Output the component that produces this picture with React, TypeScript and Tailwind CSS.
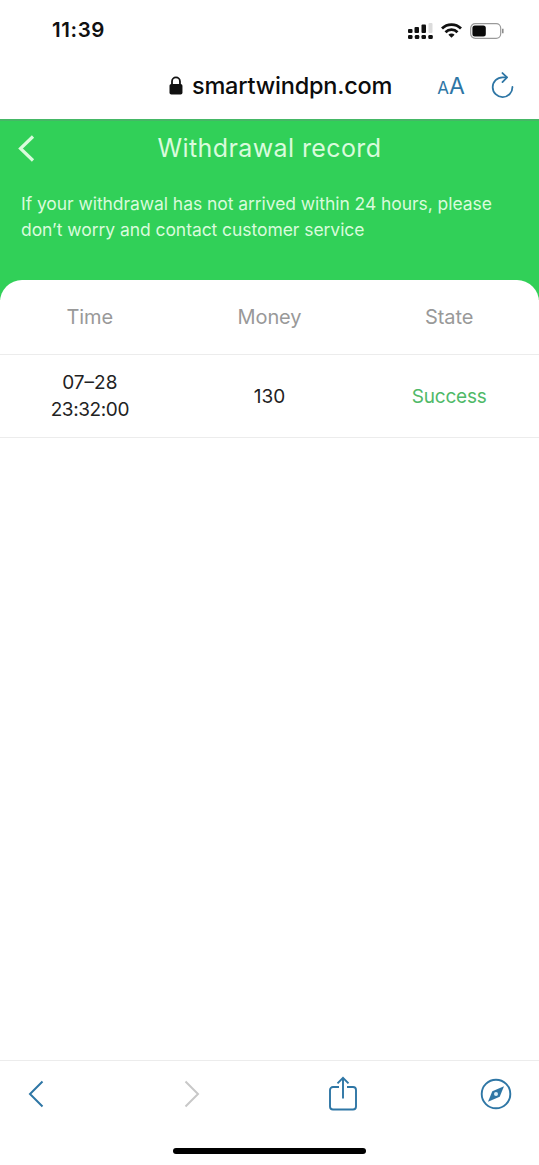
const records = [
   { date: "07–28", time: "23:32:00", money: "130", state: "Success" },
];

const columns = ["Time", "Money", "State"];

const StatusBar = () => (
   <div className="flex h-[61px] shrink-0 items-center justify-between pr-[34px] pl-[52px]">
      <span className="text-[20.5px] font-semibold tracking-[0.6px]">11:39</span>
      <div className="flex items-center gap-2">
         <svg width="25" height="16" viewBox="0 0 25 16" fill="#111">
            <rect x="0" y="6" width="4.5" height="4" rx="1" />
            <rect x="6.5" y="4" width="4.5" height="6" rx="1" />
            <rect x="13.5" y="1.5" width="4.5" height="8.5" rx="1" />
            <rect x="20.5" y="0" width="4" height="10" rx="1" fill="#dcdcdc" />
            <rect x="0" y="12" width="4.5" height="4" rx="1.3" />
            <rect x="6.8" y="12" width="4.5" height="4" rx="1.3" />
            <rect x="13.5" y="12" width="4.5" height="4" rx="1.3" />
            <rect x="20.3" y="12" width="4.5" height="4" rx="1.3" />
         </svg>
         <svg width="21" height="15" viewBox="0 0 21 15" fill="none" stroke="#111" strokeWidth="2.8">
            <path d="M1 5.4a13.6 13.6 0 0 1 19 0" />
            <path d="M4.5 9.2a8.5 8.5 0 0 1 12 0" />
            <path d="M10.5 14.8 7.4 11.8a4.4 4.4 0 0 1 6.2 0z" fill="#111" stroke="none" />
         </svg>
         <svg width="35" height="16" viewBox="0 0 35 16">
            <rect x="0.7" y="0.7" width="30" height="14.6" rx="4.5" fill="none" stroke="#9a9a9a" strokeWidth="1.2" />
            <rect x="2.4" y="2.4" width="13.4" height="11.2" rx="2.5" fill="#0a0a0a" />
            <path d="M32.8 5.8v4.4" stroke="#888" strokeWidth="1.5" />
         </svg>
      </div>
   </div>
);

const AddressBar = () => (
   <div className="flex h-[58px] shrink-0 items-center pr-6 pb-[9px] pl-[169px]">
      <svg width="14" height="19" viewBox="0 0 14 19">
         <path d="M3 9V5.4a4 4 0 0 1 8 0V9" fill="none" stroke="#111" strokeWidth="1.8" />
         <rect x="0.5" y="8" width="13" height="10.5" rx="1.8" fill="#111" />
      </svg>
      <span className="ml-[9px] w-[246px] text-[23.5px] font-medium tracking-[-0.2px] whitespace-nowrap text-[#0c0c0c]">
         smartwindpn.com
      </span>
      <div className="mt-0.5 flex w-[54px] items-baseline text-[#2e76a5]">
         <span className="text-[17px]">A</span>
         <span className="text-[23px]">A</span>
      </div>
      <svg
         className="mb-0.5"
         width="24"
         height="26"
         viewBox="0 0 24 26"
         fill="none"
         stroke="#2e76a5"
         strokeWidth="1.8"
         strokeLinecap="round"
         strokeLinejoin="round"
      >
         <path d="M21.5 15A9.900 9.900 0 1 1 11.700 5.300h4" />
         <path d="M11.500 1l4.600 4.400-4.600 4.600" />
      </svg>
   </div>
);

const RecordHeader = () => (
   <div className="h-[181px] shrink-0 border-t-2 border-[#45b866] bg-[#31d058] text-[#d9fbdc]">
      <div className="grid h-[55px] grid-cols-[60px_1fr_60px] items-center">
         <svg
            className="ml-[18px]"
            width="17"
            height="27"
            viewBox="0 0 17 27"
            fill="none"
            stroke="currentColor"
            strokeWidth="3.2"
         >
            <path d="M15 1.500 2.500 13.500 15 25.500" />
         </svg>
         <h1 className="pt-px text-center text-[25px] tracking-[0.4px] whitespace-nowrap">
            Withdrawal record
         </h1>
      </div>
      <p className="mt-[15px] pl-[21px] text-[17.500px] leading-[26px] tracking-[-0.06px] whitespace-nowrap">
         If your withdrawal has not arrived within 24 hours, please
         <br />
         don’t worry and contact customer service
      </p>
   </div>
);

const RecordTable = () => (
   <div className="-mt-5 flex-1 rounded-t-[22px] bg-white">
      <div className="grid h-[75px] grid-cols-3 items-center border-b border-[#ececec] text-center text-[20px] tracking-[-0.1px] text-[#999]">
         {columns.map((column) => (
            <span key={column}>{column}</span>
         ))}
      </div>
      {records.map((record) => (
         <div
            key={record.time}
            className="grid h-[83px] grid-cols-3 items-center border-b border-[#ececec] text-center text-[19px] leading-[27px] text-[#222]"
         >
            <div className="flex flex-col">
               <span>{record.date}</span>
               <span className="tracking-[-0.4px]">{record.time}</span>
            </div>
            <span>{record.money}</span>
            <span className="tracking-[-0.2px] text-[#4fb968]">{record.state}</span>
         </div>
      ))}
   </div>
);

const Toolbar = () => (
   <div className="flex h-[105px] shrink-0 flex-col items-center border-t border-[#ececec]">
      <div className="flex h-[65px] w-full items-center pl-[28px] text-[#2e76a5]">
         <svg width="16" height="28" viewBox="0 0 16 28" fill="none" stroke="currentColor" strokeWidth="2">
            <path d="M14.5 1.5 2 14l12.5 12.5" />
         </svg>
         <svg
            className="ml-[140px]"
            width="16"
            height="28"
            viewBox="0 0 16 28"
            fill="none"
            stroke="#c8c8c8"
            strokeWidth="2"
         >
            <path d="M1.5 1.5 14 14 1.5 26.5" />
         </svg>
         <svg
            className="mb-px ml-[129px]"
            width="28"
            height="35"
            viewBox="0 0 28 35"
            fill="none"
            stroke="currentColor"
            strokeWidth="1.9"
         >
            <path d="M10 11H4a3 3 0 0 0-3 3v16.500a3 3 0 0 0 3 3h20a3 3 0 0 0 3-3V14a3 3 0 0 0-3-3h-6" />
            <path d="M14 22.500V1.800M8.500 7.300 14 1.800l5.500 5.500" />
         </svg>
         <svg
            className="ml-[123px]"
            width="32"
            height="32"
            viewBox="0 0 32 32"
            fill="none"
            stroke="currentColor"
            strokeWidth="1.9"
         >
            <circle cx="16" cy="16" r="14.3" />
            <path d="M24 8.300 19.700 18.800 8 23.700l4.300-10.500z" fill="currentColor" stroke="none" />
            <circle cx="16" cy="16" r="2" fill="#d9eefa" stroke="none" />
         </svg>
      </div>
      <div className="mt-[22px] h-[6px] w-[193px] rounded-full bg-black" />
   </div>
);

const App = () => {
   return (
      <div className="flex h-[1165px] w-[539px] flex-col overflow-hidden bg-white font-[Inter,sans-serif] text-[#111]">
         <StatusBar />
         <AddressBar />
         <RecordHeader />
         <RecordTable />
         <Toolbar />
      </div>
   );
};

export default App;
